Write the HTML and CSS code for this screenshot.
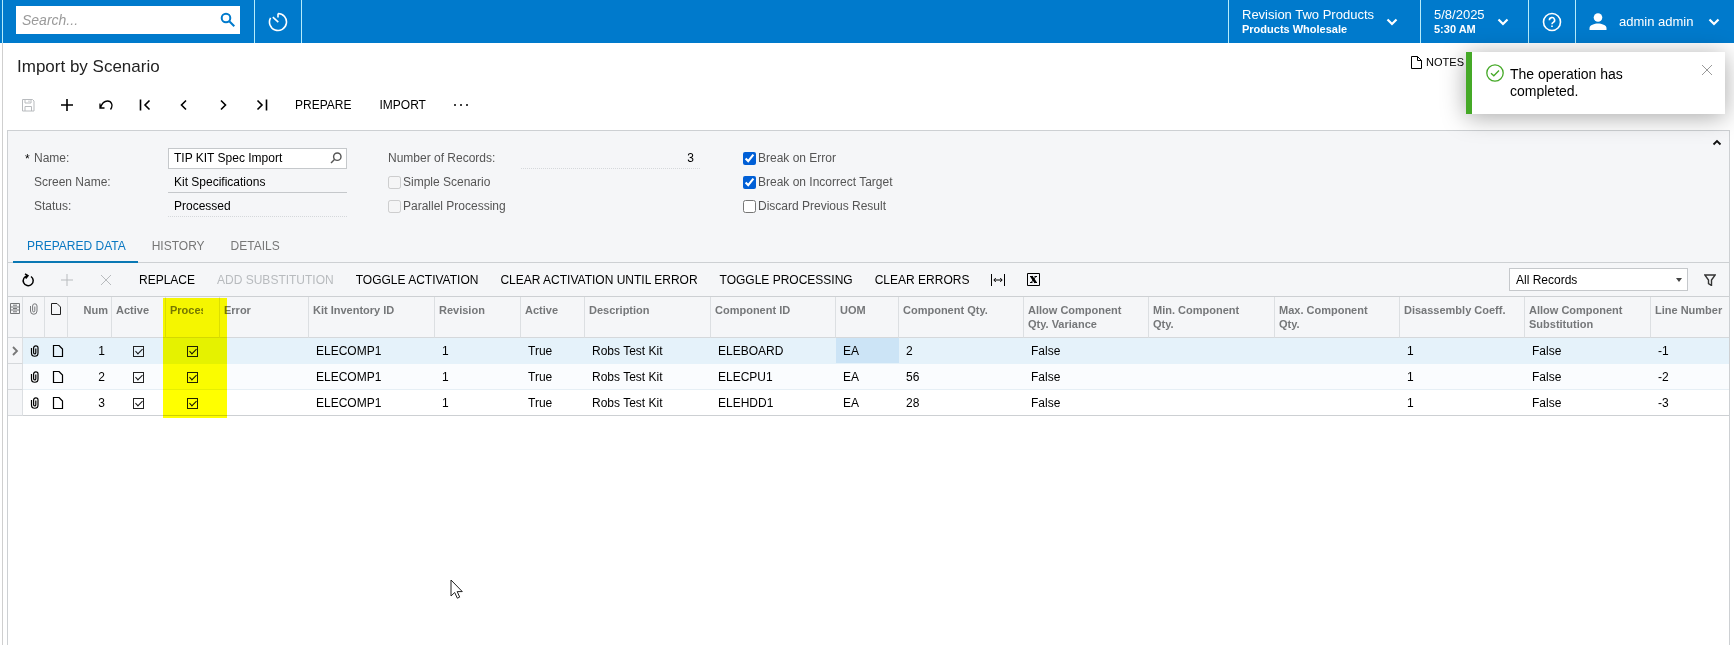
FILE: index.html
```html
<!doctype html>
<html lang="en">
  <head>
    <meta charset="UTF-8" />
    <meta name="viewport" content="width=device-width, initial-scale=1.0" />
    <title>Import by Scenario</title>
    <link rel="stylesheet" href="styles.css">
  </head>
  <body>
    <!-- shared icons -->
    <svg class="defs" aria-hidden="true">
      <symbol id="i-clip" viewBox="0 0 10 12"><path d="M1.500 3v5a3 3 0 0 0 6.500 0V3a2.200 2.200 0 0 0-4.400 0v4.800a1.100 1.100 0 0 0 2.200 0V3.500" /></symbol>
      <symbol id="i-doc" viewBox="0 0 12 12"><path d="M1.500 .5h5.500l3.500 3.500v7.500h-9z" /></symbol>
      <symbol id="i-down" viewBox="0 0 12 8"><path d="M1.500 1.500L6 6l4.500-4.500" /></symbol>
      <symbol id="i-plus" viewBox="0 0 14 14"><path d="M7 1v12M1 7h12" /></symbol>
      <symbol id="i-x" viewBox="0 0 12 12"><path d="M1 1l10 10M11 1L1 11" /></symbol>
    </svg>

    <header class="topbar">
      <div class="search">
        <input type="text" placeholder="Search..." aria-label="Search">
        <button type="button" class="search-btn" aria-label="Search">
          <svg width="16" height="16" viewBox="0 0 16 16"><circle cx="6" cy="6" r="4.300" /><path d="M9.300 9.300l5 5" /></svg>
        </button>
      </div>
      <button type="button" class="top-item top-icon" aria-label="Recently visited">
        <svg width="20" height="20" viewBox="0 0 20 20"><path d="M10 1.500a8.500 8.500 0 1 1-7.400 4.300M10 1.500v4M4.800 5.200l5.500 5" /></svg>
      </button>
      <div class="spacer"></div>
      <button type="button" class="top-item company">
        <span class="two-line"><span>Revision Two Products</span><b>Products Wholesale</b></span>
        <svg class="caret" width="12" height="8"><use href="#i-down" /></svg>
      </button>
      <button type="button" class="top-item date">
        <span class="two-line"><span>5/8/2025</span><b>5:30 AM</b></span>
        <svg class="caret" width="12" height="8"><use href="#i-down" /></svg>
      </button>
      <button type="button" class="top-item top-icon" aria-label="Help">
        <svg width="20" height="20" viewBox="0 0 20 20"><circle cx="10" cy="10" r="8.500" /><path d="M7.400 8.200a2.600 2.600 0 1 1 3.900 2.200c-.9.500-1.300.9-1.300 1.800M10 13.400v1.600" /></svg>
      </button>
      <button type="button" class="top-item user">
        <svg class="person" width="18" height="18" viewBox="0 0 18 18"><circle cx="9" cy="4.500" r="4.300" /><path d="M.5 17v-2c0-3 5-4.500 8.500-4.500s8.500 1.500 8.500 4.500v2z" /></svg>
        <span>admin admin</span>
        <svg class="caret" width="12" height="8"><use href="#i-down" /></svg>
      </button>
    </header>

    <main class="page">
      <div class="title-row">
        <h1>Import by Scenario</h1>
        <button type="button" class="notes">
          <svg width="11" height="13" viewBox="0 0 11 13"><path d="M.5.500h6l4 4v8h-10zM6.500.500v4h4" /></svg>
          NOTES
        </button>
      </div>

      <div class="tools">
        <button type="button" class="ico" aria-label="Save" disabled>
          <svg width="14" height="14" viewBox="0 0 14 14"><path d="M1.500 1.500h10l1.500 1.500v10H1.500zM4 1.500v3.500h6V1.500M8 2.500v1.500M4 13V8.500h6.500V13" /></svg>
        </button>
        <button type="button" class="ico bold" aria-label="Add"><svg width="14" height="14"><use href="#i-plus" /></svg></button>
        <button type="button" class="ico undo" aria-label="Undo">
          <svg width="14" height="12" viewBox="0 0 14 12"><path d="M1.500 8.500C3 4 5.500 2 8.500 2c4 0 6 4.500 3 8.500M1 4.500v4.500h4.500" /></svg>
        </button>
        <button type="button" class="ico bold" aria-label="First">
          <svg width="12" height="12" viewBox="0 0 12 12"><path d="M1.500 .5v11M10.500 1.500L6 6l4.500 4.500" /></svg>
        </button>
        <button type="button" class="ico bold" aria-label="Previous">
          <svg width="12" height="12" viewBox="0 0 12 12"><path d="M8 1.500L3.500 6 8 10.500" /></svg>
        </button>
        <button type="button" class="ico bold" aria-label="Next">
          <svg width="12" height="12" viewBox="0 0 12 12"><path d="M4 1.500L8.500 6 4 10.500" /></svg>
        </button>
        <button type="button" class="ico bold" aria-label="Last">
          <svg width="12" height="12" viewBox="0 0 12 12"><path d="M10.500 .5v11M1.500 1.500L6 6l-4.500 4.500" /></svg>
        </button>
        <button type="button" class="cmd">PREPARE</button>
        <button type="button" class="cmd">IMPORT</button>
        <button type="button" class="cmd" aria-label="More">
          <svg class="dots" width="14" height="4" viewBox="0 0 14 4"><circle cx="1" cy="2" r="1" /><circle cx="7" cy="2" r="1" /><circle cx="13" cy="2" r="1" /></svg>
        </button>
      </div>

      <section class="panel">
        <form class="summary">
          <div class="col col-main">
            <div class="field required">
              <label for="name">Name:</label>
              <div class="lookup">
                <input type="text" id="name" value="TIP KIT Spec Import">
                <svg width="12" height="12" viewBox="0 0 12 12"><circle cx="7.300" cy="4.700" r="3.700" /><path d="M4.700 7.300L1 11" /></svg>
              </div>
            </div>
            <div class="field">
              <label for="screen">Screen Name:</label>
              <input type="text" class="plain" id="screen" value="Kit Specifications" readonly>
            </div>
            <div class="field">
              <label for="status">Status:</label>
              <input type="text" class="plain dotted" id="status" value="Processed" readonly>
            </div>
          </div>
          <div class="col col-records">
            <div class="field">
              <label for="records">Number of Records:</label>
              <input type="text" class="plain dotted number" id="records" value="3" readonly>
            </div>
            <div class="check"><input type="checkbox" id="simple" disabled><label for="simple">Simple Scenario</label></div>
            <div class="check"><input type="checkbox" id="parallel" disabled><label for="parallel">Parallel Processing</label></div>
          </div>
          <div class="col">
            <div class="check"><input type="checkbox" id="breakError" checked><label for="breakError">Break on Error</label></div>
            <div class="check"><input type="checkbox" id="breakTarget" checked><label for="breakTarget">Break on Incorrect Target</label></div>
            <div class="check"><input type="checkbox" id="discard"><label for="discard">Discard Previous Result</label></div>
          </div>
          <button type="button" class="collapse" aria-label="Collapse">
            <svg width="10" height="7" viewBox="0 0 10 7"><path d="M1.500 5.500L5 2l3.500 3.500" /></svg>
          </button>
        </form>

        <nav class="tabs">
          <button type="button" class="tab active">PREPARED DATA</button>
          <button type="button" class="tab">HISTORY</button>
          <button type="button" class="tab">DETAILS</button>
        </nav>

        <div class="grid-tools">
          <button type="button" class="ico" aria-label="Refresh">
            <svg class="refresh" width="14" height="14" viewBox="0 0 14 14"><path d="M10 3.500A5 5 0 1 1 6.500 2.700M4 .8l3 1.900-2.300 2.800" /></svg>
          </button>
          <button type="button" class="ico" aria-label="Add row" disabled><svg width="14" height="14"><use href="#i-plus" /></svg></button>
          <button type="button" class="ico" aria-label="Delete row" disabled><svg width="12" height="12"><use href="#i-x" /></svg></button>
          <button type="button" class="cmd">REPLACE</button>
          <button type="button" class="cmd" disabled>ADD SUBSTITUTION</button>
          <button type="button" class="cmd">TOGGLE ACTIVATION</button>
          <button type="button" class="cmd">CLEAR ACTIVATION UNTIL ERROR</button>
          <button type="button" class="cmd">TOGGLE PROCESSING</button>
          <button type="button" class="cmd">CLEAR ERRORS</button>
          <button type="button" class="cmd" aria-label="Fit to screen">
            <svg width="14" height="12" viewBox="0 0 14 12"><path d="M.5 0v12M13.500 0v12M3 6h8M4.800 4L2.800 6l2 2M9.200 4l2 2-2 2" /></svg>
          </button>
          <button type="button" class="cmd" aria-label="Export to Excel">
            <svg class="excel" width="13" height="13" viewBox="0 0 13 13"><path d="M.5.500h12v12H.5z" /><path d="M3 3.500h3M7.500 3.500H10M3 9.500h2.500M7 9.500h3M8.800 3.500l-4.600 6" /><path class="thick" d="M4.500 3.500l4 6" /></svg>
          </button>
          <div class="spacer"></div>
          <div class="select-box">
            <select aria-label="Filter">
              <option>All Records</option>
            </select>
          </div>
          <button type="button" class="filter" aria-label="Filter settings">
            <svg width="12" height="12" viewBox="0 0 12 12"><path d="M.8 1h10.400L7.500 6v5.500l-3-1.800V6z" /></svg>
          </button>
        </div>

        <div class="grid">
          <table>
            <colgroup>
              <col class="w-mark"><col class="w-clip"><col class="w-doc"><col class="w-num"><col class="w-check"><col class="w-check">
              <col class="w-error"><col class="w-wide"><col class="w-rev"><col class="w-active"><col class="w-wide"><col class="w-qty">
              <col class="w-uom"><col class="w-qty"><col class="w-qty"><col class="w-wide"><col class="w-qty"><col class="w-qty"><col class="w-wide"><col>
            </colgroup>
            <thead>
              <tr>
                <th class="mid"><svg width="10" height="11" viewBox="0 0 10 11"><path d="M.5.500h9v10h-9zM.5 4h9M.5 7h9M3 2.200h4M3 5.500h4M3 8.800h4" /></svg></th>
                <th class="mid"><svg width="10" height="12"><use href="#i-clip" /></svg></th>
                <th class="mid dark"><svg width="12" height="12"><use href="#i-doc" /></svg></th>
                <th class="num">Num</th>
                <th>Active</th>
                <th class="cut"><div>Processed</div></th>
                <th>Error</th>
                <th>Kit Inventory ID</th>
                <th>Revision</th>
                <th>Active</th>
                <th>Description</th>
                <th>Component ID</th>
                <th>UOM</th>
                <th>Component Qty.</th>
                <th>Allow Component Qty. Variance</th>
                <th>Min. Component Qty.</th>
                <th>Max. Component Qty.</th>
                <th>Disassembly Coeff.</th>
                <th>Allow Component Substitution</th>
                <th>Line Number</th>
              </tr>
            </thead>
            <tbody>
              <tr class="current">
                <td class="mark"><svg width="8" height="10" viewBox="0 0 8 10"><path d="M2 1l4 4-4 4" /></svg></td>
                <td class="icon"><svg width="10" height="12"><use href="#i-clip" /></svg></td>
                <td class="icon"><svg width="12" height="12"><use href="#i-doc" /></svg></td>
                <td class="num">1</td>
                <td class="tick"><input type="checkbox" aria-label="Active 1" checked></td>
                <td class="tick"><input type="checkbox" aria-label="Processed 1" checked></td>
                <td></td><td>ELECOMP1</td><td>1</td><td>True</td><td>Robs Test Kit</td><td>ELEBOARD</td>
                <td class="focused">EA</td><td>2</td><td>False</td><td></td><td></td><td>1</td><td>False</td><td>-1</td>
              </tr>
              <tr>
                <td class="mark"></td>
                <td class="icon"><svg width="10" height="12"><use href="#i-clip" /></svg></td>
                <td class="icon"><svg width="12" height="12"><use href="#i-doc" /></svg></td>
                <td class="num">2</td>
                <td class="tick"><input type="checkbox" aria-label="Active 2" checked></td>
                <td class="tick"><input type="checkbox" aria-label="Processed 2" checked></td>
                <td></td><td>ELECOMP1</td><td>1</td><td>True</td><td>Robs Test Kit</td><td>ELECPU1</td>
                <td>EA</td><td>56</td><td>False</td><td></td><td></td><td>1</td><td>False</td><td>-2</td>
              </tr>
              <tr>
                <td class="mark"></td>
                <td class="icon"><svg width="10" height="12"><use href="#i-clip" /></svg></td>
                <td class="icon"><svg width="12" height="12"><use href="#i-doc" /></svg></td>
                <td class="num">3</td>
                <td class="tick"><input type="checkbox" aria-label="Active 3" checked></td>
                <td class="tick"><input type="checkbox" aria-label="Processed 3" checked></td>
                <td></td><td>ELECOMP1</td><td>1</td><td>True</td><td>Robs Test Kit</td><td>ELEHDD1</td>
                <td>EA</td><td>28</td><td>False</td><td></td><td></td><td>1</td><td>False</td><td>-3</td>
              </tr>
            </tbody>
          </table>
          <div class="marker"></div>
        </div>
      </section>
    </main>

    <div class="toast" role="status">
      <svg class="ok" width="18" height="18" viewBox="0 0 18 18"><circle cx="9" cy="9" r="8.200" /><path d="M5 9.200l2.800 2.600L13 6.500" /></svg>
      <p>The operation has completed.</p>
      <button type="button" aria-label="Close"><svg width="12" height="12"><use href="#i-x" /></svg></button>
    </div>

    <svg class="pointer" width="14" height="20" viewBox="0 0 14 20"><path d="M1 1v16l3.700-3.500 2.600 5.700 2.400-1.100-2.500-5.500h5.100z" /></svg>
  </body>
</html>
```
FILE: styles.css
```css
* {
  box-sizing: border-box;
}
body {
  margin: 0;
  min-height: 100vh;
  display: flex;
  flex-direction: column;
  position: relative;
  font-family: "Liberation Sans", Arial, sans-serif;
  font-size: 12px;
  color: #000;
  background: #fff;
}
button {
  padding: 0;
  border: none;
  background: none;
  font: inherit;
  color: inherit;
  cursor: pointer;
}
svg {
  display: block;
  fill: none;
  stroke: currentColor;
}
.defs {
  position: absolute;
  width: 0;
  height: 0;
}
.spacer {
  flex: 1;
}

/* top bar */
.topbar {
  display: flex;
  height: 43px;
  padding-left: 2px;
  background: #007acc;
  color: #fff;
  font-size: 13px;
}
.search {
  display: flex;
  align-items: center;
  width: 252px;
  padding: 0 18px 4px 13px;
  border-left: 1px solid #b5ecfb;
}
.search input {
  flex: 1;
  min-width: 0;
  height: 28px;
  padding: 0 30px 0 6px;
  border: none;
  font: italic 14px "Liberation Sans", Arial, sans-serif;
}
.search input::placeholder {
  color: #9a9a9a;
}
.search-btn {
  margin-left: -20px;
  color: #007acc;
}
.search-btn svg {
  stroke-width: 2;
}
.top-item {
  display: flex;
  align-items: center;
  border-left: 1px solid #b5ecfb;
  text-align: left;
}
.top-icon {
  justify-content: center;
  width: 47px;
}
.top-icon svg {
  stroke-width: 1.6;
}
.topbar .spacer {
  border-left: 1px solid #b5ecfb;
}
.two-line {
  display: flex;
  flex-direction: column;
  line-height: 15px;
}
.two-line b {
  font-size: 11px;
  line-height: 14px;
}
.caret {
  stroke-width: 2.2;
}
.company {
  width: 192px;
  padding-left: 13px;
  gap: 12px;
}
.date {
  width: 108px;
  padding-left: 13px;
  gap: 12px;
}
.user {
  width: 159px;
  padding: 0 14px 0 13px;
  gap: 12px;
}
.user span {
  flex: 1;
}
.person {
  fill: #fff;
  stroke: none;
}

/* page */
.page {
  flex: 1;
  display: flex;
  flex-direction: column;
  margin-left: 2px;
  padding: 0 4px;
  border-left: 1px solid #cfcfcf;
}
.title-row {
  display: flex;
  justify-content: space-between;
  height: 46px;
  padding: 0 266px 0 10px;
}
h1 {
  margin: 0;
  font-size: 17px;
  font-weight: normal;
  line-height: 48px;
  color: #222;
}
.notes {
  display: flex;
  align-items: center;
  gap: 4px;
  height: 38px;
  font-size: 11px;
}
.tools,
.grid-tools {
  display: flex;
  align-items: center;
}
.tools {
  height: 31px;
  margin-bottom: 10px;
  padding-left: 1px;
}
.ico {
  display: flex;
  justify-content: center;
  width: 39px;
}
.bold svg {
  stroke-width: 1.6;
}
.undo svg {
  stroke-width: 1.3;
}
.refresh {
  stroke-width: 1.5;
}
.cmd {
  padding: 0 11px;
}
.tools .cmd {
  padding: 0 14px;
}
.grid-tools .ico:nth-child(3) {
  margin-right: 3px;
}
button:disabled {
  color: #b8bbbe;
  cursor: default;
}
.dots {
  fill: currentColor;
  stroke: none;
}
.excel .thick {
  stroke-width: 2.4;
}

/* summary form */
.panel {
  flex: 1;
  border: 1px solid #cdd0d3;
  border-bottom: none;
}
.summary {
  display: flex;
  position: relative;
  padding: 15px 0 12px 16px;
  background: #f5f6f8;
  color: #555;
}
.col-main {
  width: 364px;
}
.col-records {
  width: 355px;
}
.field,
.check {
  display: flex;
  align-items: center;
  height: 24px;
}
.col-main label {
  width: 144px;
  padding-left: 10px;
}
.required label {
  position: relative;
}
.required label::before {
  content: "*";
  position: absolute;
  left: 1px;
  top: 1px;
  color: #000;
}
.field input {
  font: inherit;
  color: #000;
}
.lookup {
  display: flex;
  align-items: center;
  width: 179px;
  height: 21px;
  padding-right: 4px;
  border: 1px solid #c5c8cb;
  background: #fff;
}
.lookup input {
  flex: 1;
  min-width: 0;
  padding: 0 5px;
  border: none;
  background: none;
}
.lookup svg {
  stroke-width: 1.4;
}
.plain {
  width: 179px;
  height: 22px;
  padding: 0 6px;
  border: none;
  border-bottom: 1px solid #c5c8cb;
  background: none;
}
.dotted {
  border-bottom: 1px dotted #d5d8db;
}
.number {
  text-align: right;
}
.col-records .field label {
  width: 133px;
}
.check {
  gap: 2px;
}
.check input {
  width: 13px;
  height: 13px;
  margin: 0;
  accent-color: #005fd6;
}
.collapse {
  position: absolute;
  right: 7px;
  top: 8px;
  color: #111;
}
.collapse svg {
  stroke-width: 1.8;
}

/* tabs */
.tabs {
  display: flex;
  height: 33px;
  padding-left: 5px;
  border-bottom: 1px solid #cdd0d3;
  background: #f5f6f8;
}
.tab {
  height: 33px;
  padding: 0 12px 0 14px;
  border-bottom: 2px solid transparent;
  color: #777;
}
.tab.active {
  border-bottom-color: #0a78b4;
  color: #0a78c2;
}

.grid-tools {
  height: 34px;
  border-bottom: 1px solid #cdd0d3;
  background: #f5f6f8;
}
.select-box {
  position: relative;
  width: 179px;
}
.select-box select {
  width: 100%;
  height: 23px;
  padding: 0 6px;
  border: 1px solid #c5c8cb;
  border-radius: 0;
  appearance: none;
  background: #fff;
  font: inherit;
  color: #000;
}
.select-box::after {
  content: "";
  position: absolute;
  right: 6px;
  top: 10px;
  border: 3px solid transparent;
  border-top: 4px solid #444;
  border-bottom: none;
}
.filter {
  padding: 0 13px 0 16px;
  color: #333;
}
.filter svg {
  stroke-width: 1.4;
}

/* grid */
.grid {
  position: relative;
}
table {
  width: 100%;
  table-layout: fixed;
  border-collapse: separate;
  border-spacing: 0;
}
.w-mark { width: 15px; }
.w-clip { width: 22px; }
.w-doc { width: 23px; }
.w-num { width: 44px; }
.w-check { width: 54px; }
.w-error { width: 89px; }
.w-wide { width: 126px; }
.w-rev { width: 86px; }
.w-active { width: 64px; }
.w-qty { width: 125px; }
.w-uom { width: 63px; }
th {
  height: 41px;
  padding: 6px 16px 0 4px;
  border-right: 1px solid #dcdfe2;
  border-bottom: 1px solid #d5d8db;
  background: #f5f6f8;
  color: #757779;
  font-size: 11px;
  line-height: 14px;
  text-align: left;
  vertical-align: top;
}
th:last-child {
  padding-right: 0;
  border-right: none;
  white-space: nowrap;
}
th.mid {
  padding: 6px 0 0;
}
th.mid svg,
td.tick input {
  margin: 0 auto;
}
th.dark {
  color: #222;
}
.cut div {
  width: 33px;
  overflow: hidden;
}
td {
  height: 26px;
  padding: 1px 7px 0;
  border-bottom: 1px solid #e6eff5;
  line-height: 14px;
  white-space: nowrap;
}
tbody tr:nth-child(2) td {
  background: #fafcfe;
}
tbody tr:last-child td {
  border-bottom-color: #cdd0d3;
}
tbody .current td {
  border-bottom-color: #e5f2fa;
  background: #e5f2fa;
}
tbody .current .focused {
  background: #cce4f6;
}
tbody tr .mark,
tbody tr:nth-child(n) .mark {
  padding: 0 3px;
  border-right: 1px solid #dcdfe2;
  border-bottom-color: #d5d8db;
  background: #f5f6f8;
  color: #777;
}
.mark svg {
  stroke-width: 1.8;
}
td.icon {
  padding: 1px 0 0 7px;
}
td.icon svg {
  stroke-width: 1.2;
}
.num {
  text-align: right;
}
th.num {
  padding: 6px 3px 0 0;
}
td.tick {
  padding: 1px 1px 0 0;
}
td.tick input {
  display: block;
  position: relative;
  width: 11px;
  height: 11px;
  border: 1px solid #222;
  appearance: none;
}
td.tick input:checked::after {
  content: "";
  position: absolute;
  left: 3px;
  top: 0;
  width: 3px;
  height: 6px;
  border: solid #111;
  border-width: 0 1px 1px 0;
  transform: rotate(45deg);
}
/* highlighter over the Processed column */
.marker {
  position: absolute;
  left: 155px;
  top: 1px;
  width: 64px;
  height: 120px;
  background: #ffff00;
  mix-blend-mode: multiply;
  pointer-events: none;
}

.toast {
  position: absolute;
  top: 52px;
  right: 9px;
  display: flex;
  align-items: flex-start;
  width: 259px;
  padding: 12px 12px 14px 14px;
  border-left: 6px solid #45a927;
  background: #fff;
  box-shadow: 0 3px 24px rgba(0, 0, 0, 0.35);
  font-size: 14px;
  line-height: 17px;
}
.toast p {
  flex: 1;
  margin: 2px 30px 0 6px;
}
.toast .ok {
  color: #45a927;
  stroke-width: 1.3;
}
.toast button {
  color: #999;
}
.pointer {
  position: absolute;
  left: 450px;
  top: 579px;
  fill: #fff;
  stroke: #222;
}
```
